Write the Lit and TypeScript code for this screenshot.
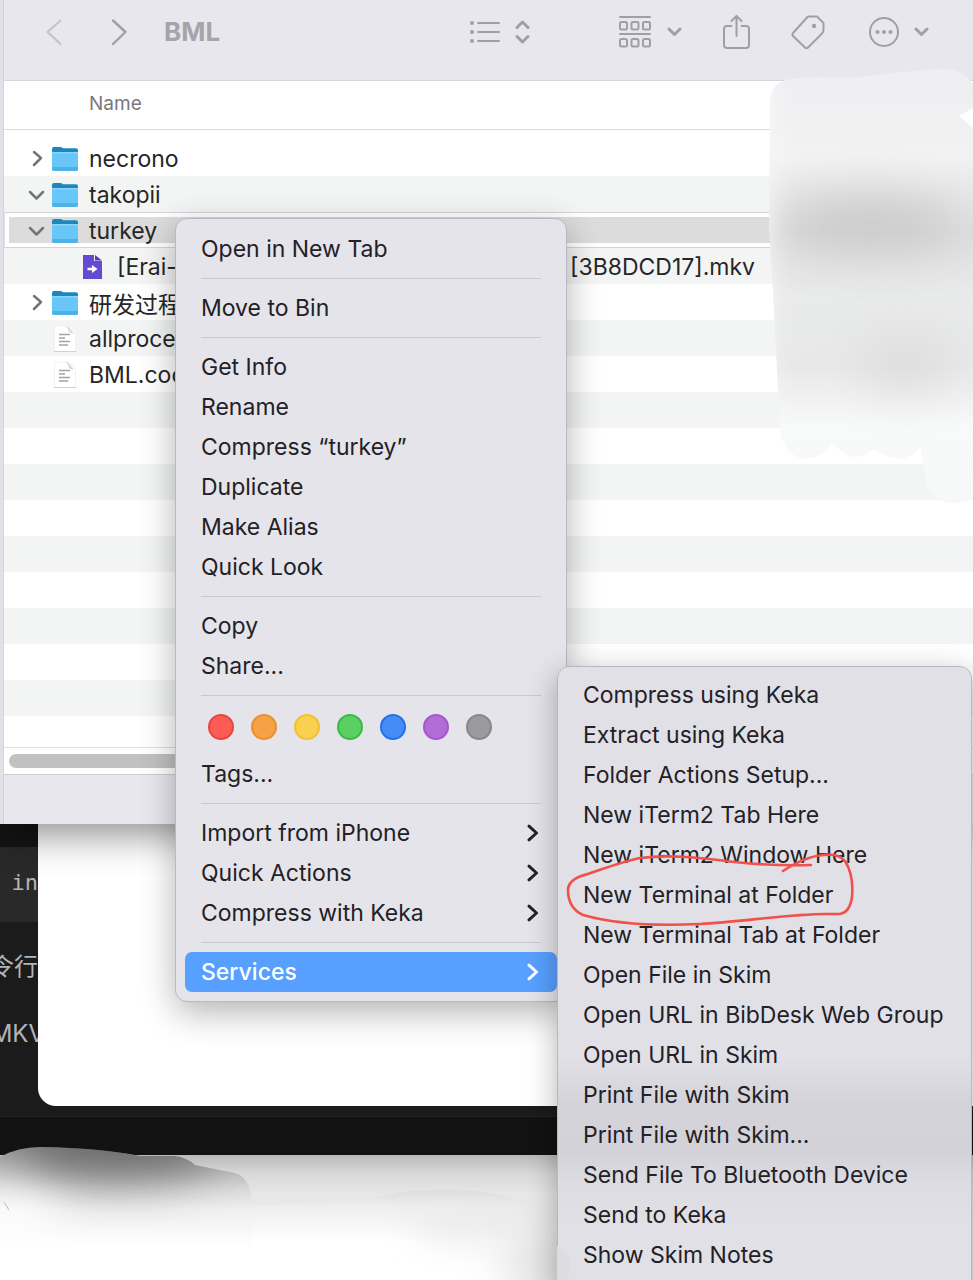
import { LitElement, html, svg, css, nothing } from "lit";
import { customElement, property } from "lit/decorators.js";
import { classMap } from "lit/directives/class-map.js";

type Entry = { label: string; arrow?: boolean; active?: boolean } | "line" | "tags";

const contextEntries: Entry[] = [
  { label: "Open in New Tab" },
  "line",
  { label: "Move to Bin" },
  "line",
  { label: "Get Info" },
  { label: "Rename" },
  { label: "Compress “turkey”" },
  { label: "Duplicate" },
  { label: "Make Alias" },
  { label: "Quick Look" },
  "line",
  { label: "Copy" },
  { label: "Share..." },
  "line",
  "tags",
  { label: "Tags..." },
  "line",
  { label: "Import from iPhone", arrow: true },
  { label: "Quick Actions", arrow: true },
  { label: "Compress with Keka", arrow: true },
  "line",
  { label: "Services", arrow: true, active: true },
];

const serviceEntries: Entry[] = [
  "Compress using Keka",
  "Extract using Keka",
  "Folder Actions Setup...",
  "New iTerm2 Tab Here",
  "New iTerm2 Window Here",
  "New Terminal at Folder",
  "New Terminal Tab at Folder",
  "Open File in Skim",
  "Open URL in BibDesk Web Group",
  "Open URL in Skim",
  "Print File with Skim",
  "Print File with Skim...",
  "Send File To Bluetooth Device",
  "Send to Keka",
  "Show Skim Notes",
].map((label) => ({ label }));

const tagColours = ["red", "orange", "yellow", "green", "blue", "purple", "gray"];

@customElement("context-menu")
class ContextMenu extends LitElement {
  @property({ attribute: false }) entries: Entry[] = [];
  @property() label = "";

  static styles = css`
    :host {
      display: block;
      box-sizing: border-box;
      border: 1px solid #b9b8be;
      border-radius: 12px;
      padding: 10px 9px 9px;
      font-size: 23px;
      color: #222126;
    }
    .item {
      display: flex;
      align-items: center;
      justify-content: space-between;
      box-sizing: border-box;
      width: 100%;
      height: 40px;
      margin: 0;
      padding: 0 18px 0 16px;
      border: 0;
      border-radius: 7px;
      background: none;
      font: inherit;
      color: inherit;
      text-align: left;
      white-space: nowrap;
    }
    .active {
      background: #58a0ff;
      color: #fff;
      font-weight: 500;
    }
    .line {
      height: 1px;
      margin: 9px 16px;
      border: 0;
      background: #cac9cf;
    }
    .tags {
      display: flex;
      gap: 17px;
      padding: 9px 23px 14px;
    }
    .tag {
      box-sizing: border-box;
      width: 26px;
      height: 26px;
      padding: 0;
      border-radius: 50%;
      border: 2px solid;
    }
    .red { background: #fb5d55; border-color: #e94540; }
    .orange { background: #f8a045; border-color: #ea8f2e; }
    .yellow { background: #f9d050; border-color: #f0c130; }
    .green { background: #5bcf62; border-color: #3cba48; }
    .blue { background: #468cf7; border-color: #2072ea; }
    .purple { background: #b26dd5; border-color: #a258cb; }
    .gray { background: #9b9b9f; border-color: #87878b; }
  `;

  render() {
    return html`<div role="menu" aria-label=${this.label}>
      ${this.entries.map((e) => {
        if (e === "line") return html`<hr class="line" />`;
        if (e === "tags")
          return html`<div class="tags">
            ${tagColours.map((c) => html`<button class="tag ${c}" aria-label=${c}></button>`)}
          </div>`;
        return html`<button role="menuitem" class=${classMap({ item: true, active: !!e.active })}>
          <span>${e.label}</span>
          ${e.arrow
            ? html`<svg width="12" height="18" viewBox="0 0 12 18" fill="none" stroke="currentColor"
                stroke-width="3" stroke-linecap="round" stroke-linejoin="round">
                <path d="M2 2.2 9.5 9 2 15.8" />
              </svg>`
            : nothing}
        </button>`;
      })}
    </div>`;
  }
}

const folderIcon = html`<svg width="28" height="26" viewBox="0 0 28 26">
  <path d="M1 3Q1 1 3 1H9Q11 1 12 2.2H25Q27 2.2 27 4.2V12H1Z" fill="#1e86bd" />
  <path d="M1 6H27V23Q27 25 25 25H3Q1 25 1 23Z" fill="#68c6f8" />
  <path d="M1 6H27V7.4H1Z" fill="#8ad7fb" />
  <path d="M1 21H27V23Q27 25 25 25H3Q1 25 1 23Z" fill="#4fb2e6" />
</svg>`;

const videoIcon = html`<svg width="20" height="26" viewBox="0 0 20 26">
  <path d="M0 1H11V7H19V25H0Z" fill="#644bd2" />
  <path d="M12 1 19 6.5H12Z" fill="#5238b8" />
  <path d="M4.500 13.800H9V11L14.500 15 9 19V16.200H4.500Z" fill="#fff" />
</svg>`;

const textIcon = html`<svg width="28" height="28" viewBox="0 0 28 28">
  <path d="M3.500 1H18L24.500 8V26.500H3.500Z" fill="#fff" stroke="#f2f2f2" />
  <path d="M14 1.500Q17 2 17.500 6 18 8 23 8.500L17 1.500Z" fill="#dadada" />
  <path d="M3 26.500H25" stroke="#d0d0d0" />
  <path d="M8 9.500H19M8 13H14M8 16.500H19M8 20H17" stroke="#a4a4a4" stroke-width="1.300" />
</svg>`;

const closedArrow = html`<svg width="20" height="18" viewBox="0 0 20 18" class="twist">
  <path d="M8 2 15 8 8 15" /></svg>`;
const openArrow = html`<svg width="20" height="18" viewBox="0 0 20 18" class="twist">
  <path d="M4 6 10.500 12.500 17 6" /></svg>`;

const smallDown = html`<svg width="15" height="10" viewBox="0 0 15 10" class="glyph bold">
  <path d="M2 2 7.500 7.500 13 2" /></svg>`;

const rows = [
  { name: "necrono", icon: folderIcon, twist: closedArrow },
  { name: "takopii", icon: folderIcon, twist: openArrow },
  { name: "turkey", icon: folderIcon, twist: openArrow, selected: true },
  { name: "[Erai-", tail: "[3B8DCD17].mkv", icon: videoIcon, nested: true },
  { name: "研发过程", icon: folderIcon, twist: closedArrow },
  { name: "allproce", icon: textIcon },
  { name: "BML.coc", icon: textIcon },
  ...Array.from({ length: 9 }, () => ({ name: "" })),
] as any[];

@customElement("app-root")
class AppRoot extends LitElement {
  static styles = css`
    :host {
      display: block;
      font-family: Inter, "Noto Sans CJK SC", sans-serif;
      color: #262626;
    }
    .desktop {
      position: relative;
      display: flex;
      flex-direction: column;
      height: 100vh;
      overflow: hidden;
      background: #e8e8e8;
    }
    .finder {
      position: relative;
      z-index: 1;
      flex: none;
      margin-left: 3px;
      border-left: 1px solid #d3d2d8;
      background: #fff;
      box-shadow: -4px 0 0 #e2e1e7, 0 12px 34px rgba(0, 0, 0, 0.42);
    }
    .toolbar {
      display: flex;
      align-items: center;
      justify-content: space-between;
      height: 64px;
      padding: 0 44px 16px 41px;
      background: #e8e7ed;
      border-bottom: 1px solid #d6d5da;
    }
    .cluster { display: flex; align-items: center; }
    .tools { gap: 41px; }
    .view { margin-right: 47px; }
    .more { margin-left: 3px; }
    .title {
      margin: 0 0 0 36px;
      font-size: 26px;
      line-height: 32px;
      font-weight: 700;
      color: #a5a4a9;
    }
    .tool {
      display: flex;
      align-items: center;
      gap: 15px;
      padding: 0;
      border: 0;
      background: none;
    }
    .back { margin-right: 47px; opacity: 0.5; }
    .glyph {
      display: block;
      fill: none;
      stroke: #a09fa5;
      stroke-width: 2;
      stroke-linecap: round;
      stroke-linejoin: round;
    }
    .bold { stroke-width: 3; }
    .dot { fill: #a09fa5; stroke: none; }
    .files {
      width: 100%;
      border-collapse: collapse;
      table-layout: fixed;
    }
    .head {
      height: 48px;
      padding: 0 0 2px 85px;
      box-sizing: border-box;
      border-bottom: 1px solid #dcdbe0;
      font-size: 19px;
      font-weight: 400;
      text-align: left;
      color: #78787a;
    }
    .spacer { height: 10px; padding: 0; }
    .cell { height: 36px; padding: 0; }
    .stripe { background: #f3f5f5; }
    .entry {
      display: flex;
      align-items: center;
      box-sizing: border-box;
      height: 36px;
      padding: 2px 0 0 22px;
      font-size: 23px;
      white-space: nowrap;
    }
    .selected {
      border: 1px solid #d4d4d6;
      border-left-color: #e4e4e6;
      padding-left: 21px;
      background: linear-gradient(#dcdcdc, #dcdcdc) 4px 4px / 100% 26px no-repeat #fff;
    }
    .twist {
      flex: none;
      width: 20px;
      fill: none;
      stroke: #747476;
      stroke-width: 2.500;
      stroke-linecap: round;
      stroke-linejoin: round;
    }
    .twist-space { width: 20px; }
    .icon {
      display: flex;
      justify-content: center;
      width: 28px;
      margin: 0 10px 0 5px;
    }
    .nested { padding-left: 70px; }
    .tail { margin-left: auto; }
    .long { display: flex; width: 638px; }
    .scroll {
      height: 14px;
      padding: 6px 5px;
      border-top: 1px solid #dfdee2;
      border-bottom: 1px solid #cdccd1;
    }
    .thumb { height: 14px; border-radius: 7px; background: #c1c1c1; }
    .gap { height: 31px; }
    .footer { height: 49px; background: #e8e7ed; }
    .editor {
      flex: none;
      position: relative;
      display: grid;
      grid-template-columns: 38px 1fr;
      background: #1b1b1b;
      color: #b4b4b4;
    }
    .code {
      overflow: hidden;
      background: linear-gradient(#141414 23px, #292929 23px, #292929 98px, #1b1b1b 98px);
      font-size: 24px;
      line-height: 30px;
      white-space: nowrap;
      display: flex;
      flex-direction: column;
      align-items: flex-end;
    }
    .mono {
      font: 22px/72px "DejaVu Sans Mono", monospace;
      padding-top: 23px;
    }
    .han { padding-top: 33px; }
    .mkv { padding-top: 37px; margin-right: -7px; }
    .sheet { height: 282px; background: #fff; border-radius: 0 0 0 18px; }
    .status {
      grid-column: 1 / -1;
      height: 38px;
      margin-top: 10px;
      border-top: 1px solid #262626;
      background: #121212;
    }
    .below {
      flex: 1;
      background: linear-gradient(#b9b9b9, #d8d8d8 18px, #e8e8e8 40px);
    }
    .smudge, .pen {
      position: absolute;
      left: 0;
      top: 0;
      width: 973px;
      height: 1280px;
      pointer-events: none;
    }
    .smudge { z-index: 2; }
    .pen { z-index: 5; }
    .context {
      position: absolute;
      z-index: 3;
      left: 175px;
      top: 218px;
      width: 392px;
      background: #e5e4ea;
      box-shadow: 0 10px 34px rgba(0, 0, 0, 0.3);
    }
    .services {
      position: absolute;
      z-index: 4;
      left: 557px;
      top: 666px;
      width: 415px;
      padding-top: 8px;
      padding-bottom: 20px;
      background: linear-gradient(#e1e0e6 390px, #d4d3da 436px, #d3d2d9 484px, #dddce2 515px, #e1e0e6 560px);
      box-shadow: 0 8px 30px rgba(0, 0, 0, 0.3);
    }
  `;

  private toolbar() {
    return html`<header class="toolbar">
      <div class="cluster">
        <button class="tool back" aria-label="Back">
          <svg class="glyph" width="18" height="28" viewBox="0 0 18 28"><path d="M15.500 2.500 2.500 14 15.500 26" /></svg>
        </button>
        <button class="tool" aria-label="Forward">
          <svg class="glyph" width="18" height="28" viewBox="0 0 18 28"><path d="M3 2.500 15.500 14 3 26" stroke-width="2.400" /></svg>
        </button>
        <h1 class="title">BML</h1>
      </div>
      <div class="cluster tools">
        <button class="tool view" aria-label="View">
          <svg class="glyph" width="30" height="22" viewBox="0 0 30 22">
            <path d="M8 2H29M8 11H29M8 20H29" />
            <g class="dot"><circle cx="2" cy="2" r="2" /><circle cx="2" cy="11" r="2" /><circle cx="2" cy="20" r="2" /></g>
          </svg>
          <svg class="glyph bold" width="15" height="24" viewBox="0 0 15 24"><path d="M2 7.500 7.500 2 13 7.500M2 16.500 7.500 22 13 16.500" /></svg>
        </button>
        <button class="tool" aria-label="Group">
          <svg class="glyph" width="34" height="34" viewBox="0 0 34 34">
            <path d="M2 2H32M2 19H32" />
            ${[8, 25].map((y) => [2, 13.5, 25].map((x) => svg`<rect x=${x} y=${y - 1} width="7" height="7.500" rx="1.500" />`))}
          </svg>
          ${smallDown}
        </button>
        <button class="tool" aria-label="Share">
          <svg class="glyph" width="27" height="34" viewBox="0 0 27 34">
            <path d="M8.500 11H4Q1 11 1 14V30Q1 33 4 33H23Q26 33 26 30V14Q26 11 23 11H18.500M13.500 21V1M8.500 6 13.500 1 18.500 6" />
          </svg>
        </button>
        <button class="tool" aria-label="Tags">
          <svg class="glyph" width="34" height="34" viewBox="0 0 34 34">
            <path d="M18 1.500H26L32.500 8V15Q32.500 17 31 18.500L17 32.500Q15.500 34 14 32.500L2 21Q.8 19.500 2 18L16 2.500Q17 1.500 18 1.500Z" />
            <circle class="dot" cx="23" cy="11" r="2.200" />
          </svg>
        </button>
        <button class="tool more" aria-label="More">
          <svg class="glyph" width="30" height="30" viewBox="0 0 30 30">
            <circle cx="15" cy="15" r="14" />
            <g class="dot"><circle cx="8.500" cy="15" r="2" /><circle cx="15" cy="15" r="2" /><circle cx="21.500" cy="15" r="2" /></g>
          </svg>
          ${smallDown}
        </button>
      </div>
    </header>`;
  }

  private row(r: any, i: number) {
    return html`<tr class=${i % 2 ? "stripe" : ""}>
      <td class="cell">
        ${r.name
          ? html`<div class=${classMap({ entry: true, selected: !!r.selected, nested: !!r.nested })}>
              ${r.twist ?? html`<span class=${r.nested ? "" : "twist-space"}></span>`}
              <span class="icon">${r.icon}</span>
              ${r.tail
                ? html`<span class="long"><span>${r.name}</span><span class="tail">${r.tail}</span></span>`
                : html`<span>${r.name}</span>`}
            </div>`
          : nothing}
      </td>
    </tr>`;
  }

  render() {
    return html`<main class="desktop">
      <section class="finder">
        ${this.toolbar()}
        <table class="files">
          <thead><tr><th class="head" scope="col">Name</th></tr></thead>
          <tbody>
            <tr><td class="spacer"></td></tr>
            ${rows.map((r, i) => this.row(r, i))}
          </tbody>
        </table>
        <div class="gap"></div>
        <div class="scroll"><div class="thumb"></div></div>
        <div class="footer"></div>
      </section>
      <section class="editor">
        <div class="code">
          <span class="mono">in</span>
          <span class="han">令行</span>
          <span class="mkv">MKV</span>
        </div>
        <div class="sheet"></div>
        <div class="status"></div>
      </section>
      <div class="below"></div>

      <svg class="smudge" viewBox="0 0 973 1280" aria-hidden="true">
        <defs>
          <filter id="soft" filterUnits="userSpaceOnUse" x="-200" y="0" width="1400" height="1500"><feGaussianBlur stdDeviation="22" /></filter>
          <filter id="mild" filterUnits="userSpaceOnUse" x="-200" y="0" width="1400" height="1500"><feGaussianBlur stdDeviation="14" /></filter>
          <linearGradient id="column" x1="0" y1="70" x2="0" y2="505" gradientUnits="userSpaceOnUse">
            <stop offset="0" stop-color="#efeef4" />
            <stop offset=".1" stop-color="#f0f0f1" />
            <stop offset=".2" stop-color="#f2f2f2" />
            <stop offset=".3" stop-color="#e6e6e6" />
            <stop offset=".37" stop-color="#dedede" />
            <stop offset=".52" stop-color="#e9eaea" />
            <stop offset=".68" stop-color="#e8e8e8" />
            <stop offset=".82" stop-color="#f8f9f9" />
            <stop offset="1" stop-color="#f7f9f9" />
          </linearGradient>
          <linearGradient id="lump" x1="0" y1="1147" x2="0" y2="1260" gradientUnits="userSpaceOnUse">
            <stop offset="0" stop-color="#979797" />
            <stop offset=".22" stop-color="#bcbcbc" />
            <stop offset=".38" stop-color="#dadada" />
            <stop offset=".55" stop-color="#efefef" />
            <stop offset=".9" stop-color="#fff" />
          </linearGradient>
          <linearGradient id="floor" x1="0" y1="1188" x2="0" y2="1260" gradientUnits="userSpaceOnUse">
            <stop offset="0" stop-color="#dadada" />
            <stop offset=".25" stop-color="#eeeeee" />
            <stop offset=".75" stop-color="#fff" />
          </linearGradient>
          <clipPath id="columnClip">
            <path d="M770 100Q772 82 790 79T850 78Q900 72 935 69 962 67 973 84V108L959 116 973 128V498Q965 505 948 503 924 496 924 465L920 447Q912 460 895 458 882 456 874 449 862 460 848 456L832 444Q820 461 800 458 783 452 780 430L776 350 773 290 769 230Z" />
          </clipPath>
          <clipPath id="floorClip">
            <path d="M240 1205 330 1203Q380 1197 400 1192 440 1188 475 1191 500 1193 515 1200L538 1203Q553 1208 555 1230L557 1240Q568 1250 570 1280H200V1205Z" />
          </clipPath>
          <clipPath id="lumpClip">
            <path d="M0 1157Q18 1147 40 1147 100 1148 140 1156H175Q188 1158 195 1165L235 1173Q251 1178 253 1205V1280H0Z" />
          </clipPath>
        </defs>
        <g clip-path="url(#columnClip)">
          <rect x="760" y="60" width="213" height="450" fill="url(#column)" />
          <ellipse cx="870" cy="224" rx="88" ry="28" fill="#c6c6c6" opacity=".8" filter="url(#soft)" />
          <ellipse cx="905" cy="362" rx="44" ry="28" fill="#dadada" opacity=".8" filter="url(#soft)" />
          <path d="M735 70H768V450H735Z" fill="#fafafa" filter="url(#mild)" />
        </g>
        <g clip-path="url(#floorClip)">
          <rect x="190" y="1180" width="390" height="100" fill="url(#floor)" />
          <ellipse cx="552" cy="1262" rx="46" ry="50" fill="#cfcfcf" opacity=".6" filter="url(#soft)" />
          <ellipse cx="470" cy="1225" rx="60" ry="24" fill="#e8e8e8" opacity=".6" filter="url(#mild)" />
        </g>
        <g clip-path="url(#lumpClip)">
          <rect y="1140" width="260" height="140" fill="url(#lump)" />
          <ellipse cx="118" cy="1150" rx="100" ry="32" fill="#444" opacity=".55" filter="url(#soft)" />
          <ellipse cx="0" cy="1222" rx="60" ry="24" fill="#fff" filter="url(#soft)" />
          <path d="M0 1250H260V1300H0Z" fill="#fff" filter="url(#mild)" />
        </g>
        <path d="M4 1202 9 1210" stroke="#bbb" />
      </svg>

      <context-menu class="context" label="Folder actions" .entries=${contextEntries}></context-menu>
      <context-menu class="services" label="Services" .entries=${serviceEntries}></context-menu>

      <svg class="pen" viewBox="0 0 973 1280" aria-hidden="true">
        <path d="M557 1246Q568 1250 571 1264 571 1274 566 1280H557Z" fill="#dddde1" />
        <path fill="none" stroke="#f2504a" stroke-width="2.600" stroke-linecap="round" stroke-linejoin="round"
          d="M811 865Q770 866 735 862C700 858 670 854 640 858C620 862 595 872 581 876Q568 881 568 890Q568 908 583 915C615 924 660 926 700 924C740 922 790 914 825 914H840Q850 912 852 897Q854 875 845 861Q838 853 824 855Q806 856 783 871" />
      </svg>
    </main>`;
  }
}
